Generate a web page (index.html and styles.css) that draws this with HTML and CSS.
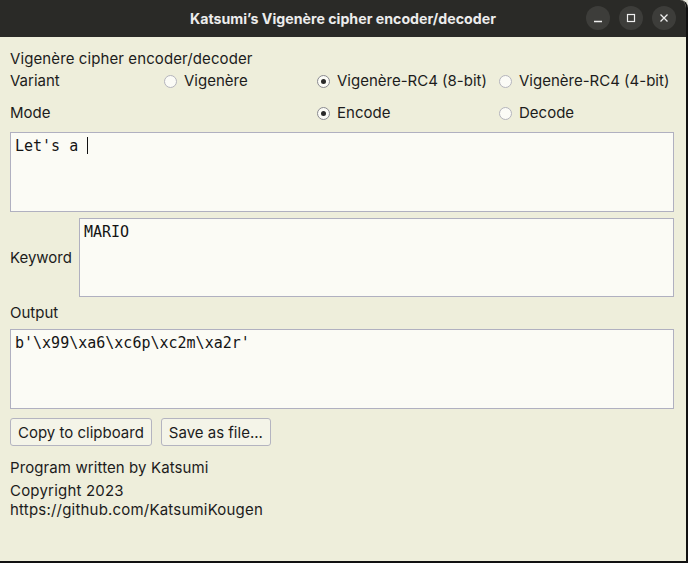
FILE: index.html
```html
<!DOCTYPE html>
<html>
<head>
<meta charset="utf-8">
<link rel="stylesheet" href="styles.css">
</head>
<body>
<div class="window">
  <div class="titlebar">
    <div class="title">Katsumi’s Vigenère cipher encoder/decoder</div>
    <div class="controls">
      <span class="ctl"><svg width="12" height="12" viewBox="0 0 12 12"><path d="M2 9.5h8" stroke="#eee" stroke-width="1.3"/></svg></span>
      <span class="ctl"><svg width="12" height="12" viewBox="0 0 12 12"><rect x="2.5" y="2.5" width="7" height="7" fill="none" stroke="#eee" stroke-width="1.2"/></svg></span>
      <span class="ctl"><svg width="12" height="12" viewBox="0 0 12 12"><path d="M2.5 2.5l7 7M9.5 2.5l-7 7" stroke="#eee" stroke-width="1.3"/></svg></span>
    </div>
  </div>
  <div class="content">
    <div class="heading">Vigenère cipher encoder/decoder</div>
    <div class="grid variant">
      <div class="lbl">Variant</div>
      <label class="radio"><span class="dot"></span>Vigenère</label>
      <label class="radio"><span class="dot on"></span>Vigenère-RC4 (8-bit)</label>
      <label class="radio"><span class="dot"></span>Vigenère-RC4 (4-bit)</label>
    </div>
    <div class="grid mode">
      <div class="lbl">Mode</div>
      <div></div>
      <label class="radio"><span class="dot on"></span>Encode</label>
      <label class="radio"><span class="dot"></span>Decode</label>
    </div>
    <div class="field input">Let's a <span class="caret"></span></div>
    <div class="keyrow">
      <div class="lbl">Keyword</div>
      <div class="field key">MARIO</div>
    </div>
    <div class="lbl outlbl">Output</div>
    <div class="field output">b'\x99\xa6\xc6p\xc2m\xa2r'</div>
    <div class="buttons">
      <button class="btn">Copy to clipboard</button>
      <button class="btn">Save as file...</button>
    </div>
    <div class="credit">Program written by Katsumi</div>
    <div class="small">Copyright 2023</div>
    <div class="small">https://github.com/KatsumiKougen</div>
  </div>
</div>
</body>
</html>
```
FILE: styles.css
```css
html, body {
  margin: 0;
  padding: 0;
  background: #e8e8de;
}
body {
  width: 688px;
  height: 563px;
  overflow: hidden;
  font-family: "Inter", "DejaVu Sans", sans-serif;
  font-size: 15px;
  color: #1c1c1c;
}
.window {
  width: 686px;
  height: 561px;
  border-right: 2px solid #111;
  border-bottom: 2px solid #111;
  border-top-right-radius: 8px;
  background: #eeeedb;
  overflow: hidden;
  display: flex;
  flex-direction: column;
}
.titlebar {
  height: 37px;
  background: #2a2a27;
  position: relative;
  display: flex;
  align-items: center;
  justify-content: center;
}
.title {
  color: #ececec;
  font-weight: 700;
  font-size: 14.2px;
}
.controls {
  position: absolute;
  right: 10px;
  top: 6px;
  display: flex;
  gap: 9px;
}
.ctl {
  width: 24px;
  height: 24px;
  border-radius: 50%;
  background: #3d3d3a;
  display: flex;
  align-items: center;
  justify-content: center;
}
.content {
  padding: 12px 12px 0 10px;
  display: flex;
  flex-direction: column;
}
.heading, .lbl {
  line-height: 20px;
}
.heading {
  letter-spacing: 0.1px;
}
.grid {
  display: grid;
  grid-template-columns: 153px 153px 182px 176px;
  height: 20px;
  align-items: center;
}
.variant { margin-top: 2px; }
.mode { margin-top: 12px; }
.radio {
  display: flex;
  align-items: center;
  line-height: 20px;
  white-space: nowrap;
}
.dot {
  width: 11px;
  height: 11px;
  border: 1px solid #b4b4bc;
  border-radius: 50%;
  background: #fbfbf6;
  margin-left: 1px;
  margin-right: 7px;
  display: inline-flex;
  align-items: center;
  justify-content: center;
}
.dot.on {
  border-color: #8a8a90;
}
.dot.on::after {
  content: "";
  width: 5px;
  height: 5px;
  border-radius: 50%;
  background: #2a2a2a;
}
.field {
  box-sizing: border-box;
  height: 80px;
  border: 1px solid #b0b0c0;
  background: #fbfbf5;
  font-family: "DejaVu Sans Mono", monospace;
  font-size: 15px;
  line-height: 18px;
  padding: 4px 4px;
  color: #141414;
  white-space: pre;
}
.input {
  margin-top: 9px;
}
.caret {
  display: inline-block;
  width: 1px;
  height: 17px;
  background: #111;
  vertical-align: -3px;
}
.keyrow {
  margin-top: 6px;
  display: flex;
  align-items: center;
  gap: 7px;
}
.key {
  flex: 1;
  height: 79px;
}
.outlbl {
  margin-top: 6px;
}
.output {
  margin-top: 6px;
}
.buttons {
  margin-top: 9px;
  display: flex;
  gap: 9px;
}
.btn {
  font-family: inherit;
  font-size: 15px;
  color: #1c1c1c;
  height: 28px;
  padding: 0 7px;
  border: 1px solid #b4b4c0;
  border-radius: 3px;
  background: #f4f4e8;
}
.credit {
  margin-top: 12px;
  line-height: 20px;
  letter-spacing: 0.1px;
}
.credit + .small {
  margin-top: 3px;
}
.small {
  line-height: 19px;
  letter-spacing: 0.2px;
}
```
